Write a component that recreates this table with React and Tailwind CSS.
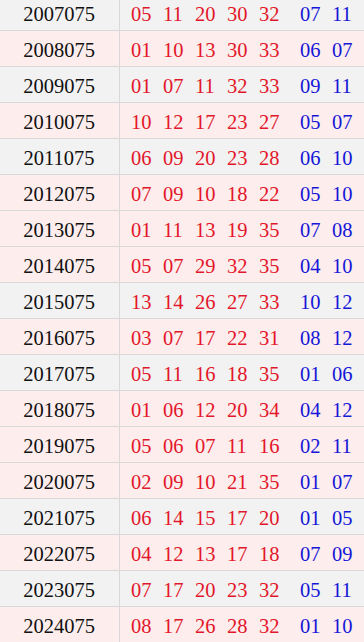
import React from "react";

const rows = [
  ["2007075", ["05", "11", "20", "30", "32"], ["07", "11"], "g"],
  ["2008075", ["01", "10", "13", "30", "33"], ["06", "07"], "p"],
  ["2009075", ["01", "07", "11", "32", "33"], ["09", "11"], "g"],
  ["2010075", ["10", "12", "17", "23", "27"], ["05", "07"], "p"],
  ["2011075", ["06", "09", "20", "23", "28"], ["06", "10"], "g"],
  ["2012075", ["07", "09", "10", "18", "22"], ["05", "10"], "p"],
  ["2013075", ["01", "11", "13", "19", "35"], ["07", "08"], "p"],
  ["2014075", ["05", "07", "29", "32", "35"], ["04", "10"], "p"],
  ["2015075", ["13", "14", "26", "27", "33"], ["10", "12"], "g"],
  ["2016075", ["03", "07", "17", "22", "31"], ["08", "12"], "p"],
  ["2017075", ["05", "11", "16", "18", "35"], ["01", "06"], "g"],
  ["2018075", ["01", "06", "12", "20", "34"], ["04", "12"], "p"],
  ["2019075", ["05", "06", "07", "11", "16"], ["02", "11"], "p"],
  ["2020075", ["02", "09", "10", "21", "35"], ["01", "07"], "p"],
  ["2021075", ["06", "14", "15", "17", "20"], ["01", "05"], "g"],
  ["2022075", ["04", "12", "13", "17", "18"], ["07", "09"], "p"],
  ["2023075", ["07", "17", "20", "23", "32"], ["05", "11"], "g"],
  ["2024075", ["08", "17", "26", "28", "32"], ["01", "10"], "p"],
];

export default function App() {
  return (
    <div
      className="w-[364px] h-[642px] overflow-hidden bg-white"
      style={{ fontFamily: '"Liberation Serif", "Noto Sans CJK SC", serif' }}
    >
      <div className="-mt-[5px] flex flex-col">
        {rows.map(([year, reds, blues, bg]) => (
          <div
            key={year}
            className={
              "flex h-[36px] border-b border-[#d8d8d8] text-[20.5px] leading-none " +
              (bg === "g" ? "bg-[#f2f2f2]" : "bg-[#fdeded]")
            }
          >
            <div className="w-[120px] shrink-0 border-r border-[#d8d8d8] flex items-center justify-center text-[#111] pr-[1px] pt-[4px]">
              {year}
            </div>
            <div className="flex items-center pl-[11px] pt-[4px]">
              {reds.map((n, i) => (
                <span key={"r" + i} className="inline-block w-[32px] text-[#e3172a]">
                  {n}
                </span>
              ))}
              <span className="inline-block w-[9px]" />
              {blues.map((n, i) => (
                <span key={"b" + i} className="inline-block w-[32px] text-[#1616d8]">
                  {n}
                </span>
              ))}
            </div>
          </div>
        ))}
      </div>
    </div>
  );
}
